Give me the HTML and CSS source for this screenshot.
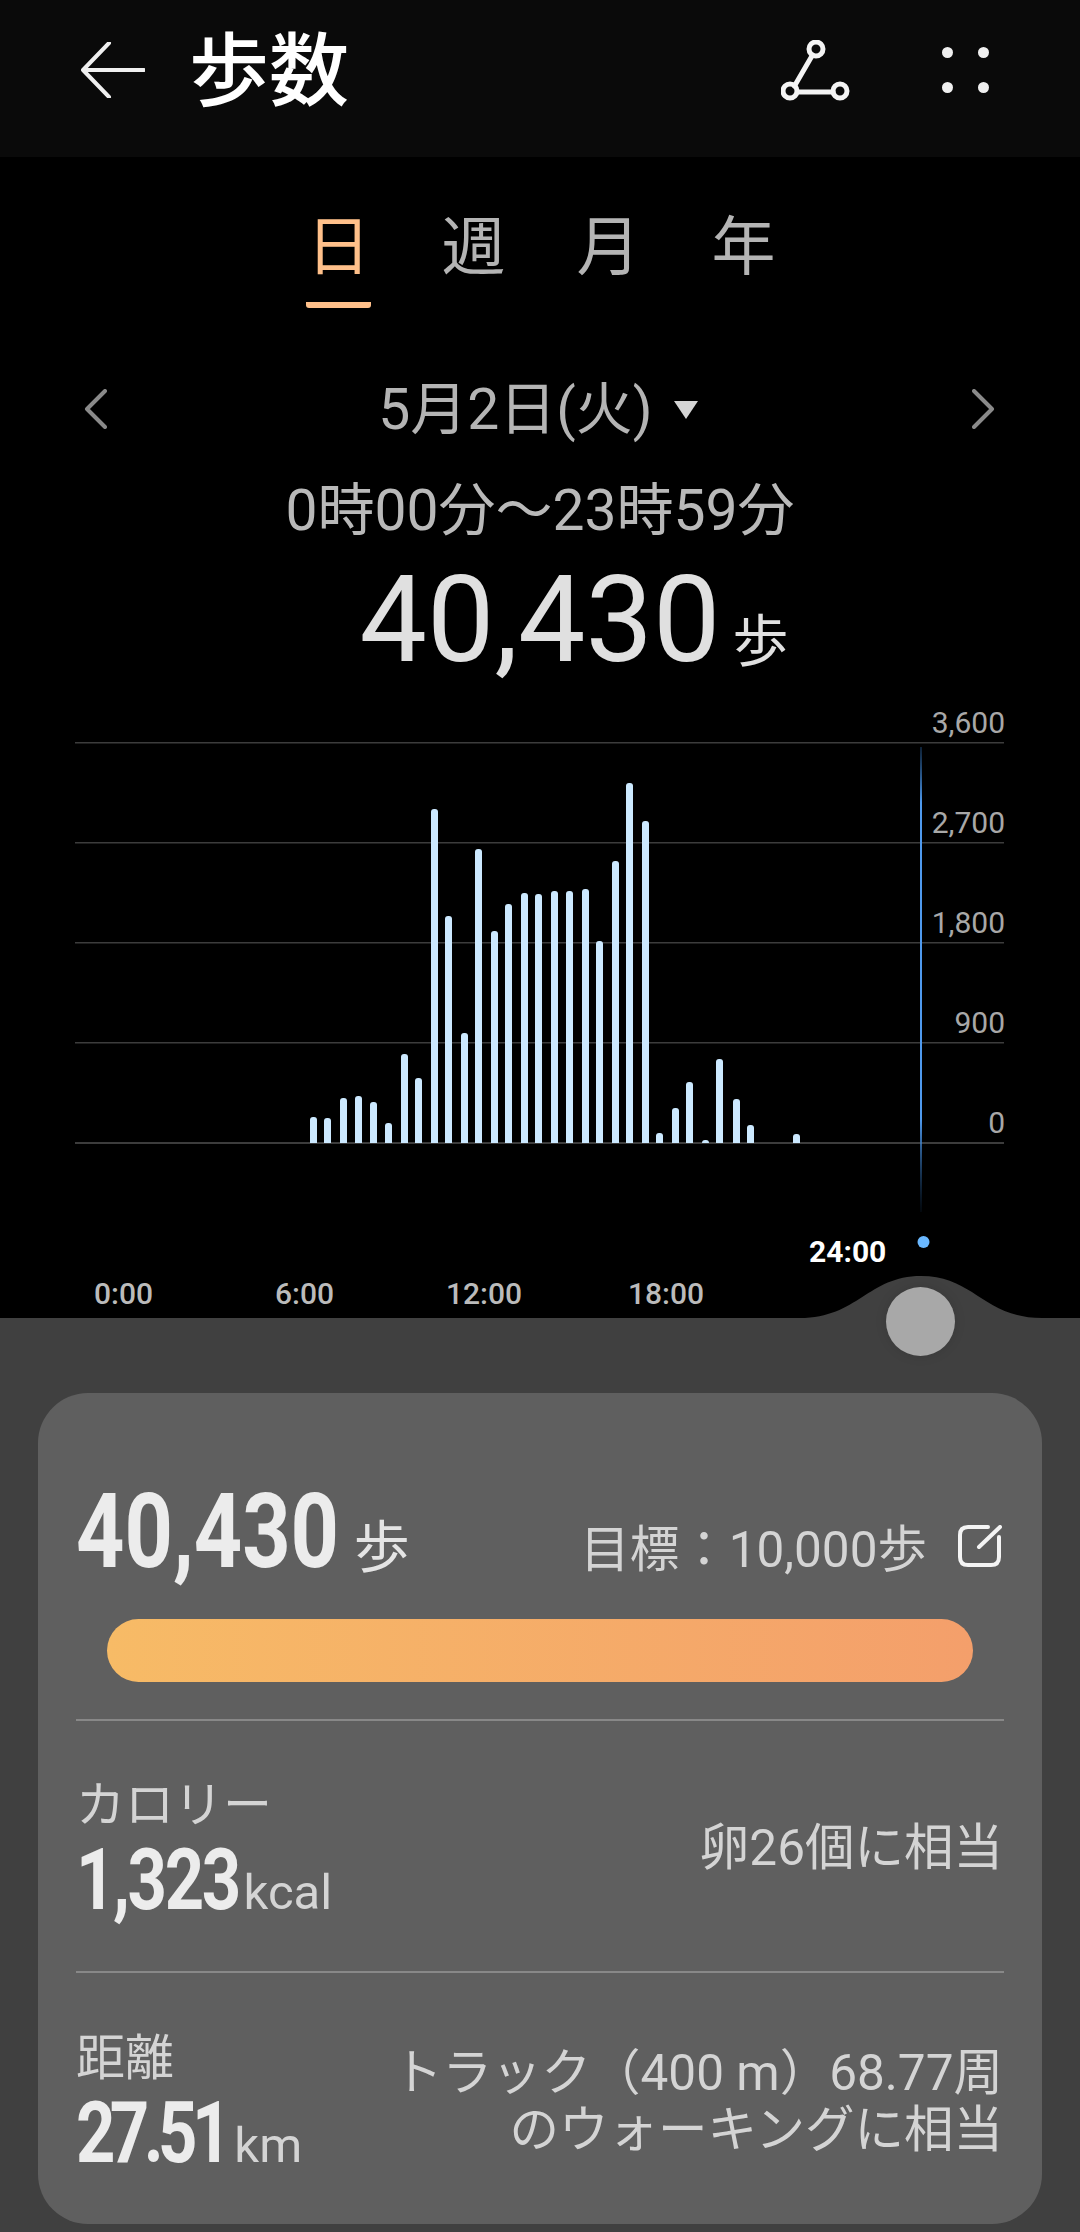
FILE: index.html
```html
<!DOCTYPE html>
<html lang="ja">
<head>
  <meta charset="UTF-8" />
  <meta name="viewport" content="width=device-width, initial-scale=1.0"/>
  <title>歩数</title>
  <link rel="stylesheet" href="styles.css">
</head>
<body>

<header class="app-bar">
  <svg class="back-icon" viewBox="0 0 64 56" width="64" height="56">
    <path d="M28 1 L2 28 L28 55 M2 28 H63" />
  </svg>
  <h1 class="app-title">歩数</h1>
  <svg class="share-icon" viewBox="0 0 70 62" width="70" height="62">
    <path d="M31.5 15 L13.5 46 M17 52 H52" />
    <circle cx="35" cy="9" r="7" />
    <circle cx="9" cy="51" r="7" />
    <circle cx="59" cy="51" r="7" />
  </svg>
  <div class="more-icon">
    <span></span><span></span><span></span><span></span>
  </div>
</header>

<nav class="tabs">
  <div class="tab active">日</div>
  <div class="tab">週</div>
  <div class="tab">月</div>
  <div class="tab">年</div>
</nav>

<div class="date-row">
  <svg class="chevron" viewBox="0 0 23 40" width="23" height="40"><path d="M21 2 L3 20 L21 38" /></svg>
  <div class="date-label">5月2日(火)<span class="caret"></span></div>
  <svg class="chevron" viewBox="0 0 23 40" width="23" height="40"><path d="M2 2 L20 20 L2 38" /></svg>
</div>

<div class="time-range">0時00分～23時59分</div>

<div class="total">
  <div class="total-num">40,430</div>
  <div class="total-unit">歩</div>
</div>

<section class="chart">
  <svg class="chart-svg" viewBox="0 700 1080 618" width="1080" height="618">
    <defs>
      <clipPath id="above-base"><rect x="0" y="700" width="1080" height="443" /></clipPath>
      <linearGradient id="cursor-fade" x1="0" y1="0" x2="0" y2="1">
        <stop offset="0" stop-color="#2f6fb5" stop-opacity="0.3" />
        <stop offset="0.12" stop-color="#4f9aee" />
        <stop offset="0.8" stop-color="#4f9aee" />
        <stop offset="1" stop-color="#1c4c80" stop-opacity="0.1" />
      </linearGradient>
    </defs>
    <g class="grid">
      <rect x="75" y="742" width="929" height="1.5" />
      <rect x="75" y="842" width="929" height="1.5" />
      <rect x="75" y="942" width="929" height="1.5" />
      <rect x="75" y="1042" width="929" height="1.5" />
      <rect x="75" y="1142" width="929" height="2" />
    </g>
    <rect x="920" y="747" width="2" height="465" fill="url(#cursor-fade)" />
    <g class="bars" clip-path="url(#above-base)">
      <rect x="310" y="1117" width="7" height="40" rx="3" />
      <rect x="324" y="1118" width="7" height="40" rx="3" />
      <rect x="340" y="1098" width="7" height="60" rx="3" />
      <rect x="355" y="1096" width="7" height="60" rx="3" />
      <rect x="370" y="1102" width="7" height="60" rx="3" />
      <rect x="385" y="1123" width="7" height="40" rx="3" />
      <rect x="401" y="1054" width="7" height="100" rx="3" />
      <rect x="415" y="1078" width="7" height="80" rx="3" />
      <rect x="431" y="809" width="7" height="350" rx="3" />
      <rect x="445" y="916" width="7" height="240" rx="3" />
      <rect x="461" y="1033" width="7" height="120" rx="3" />
      <rect x="475" y="849" width="7" height="310" rx="3" />
      <rect x="491" y="931" width="7" height="220" rx="3" />
      <rect x="505" y="904" width="7" height="250" rx="3" />
      <rect x="521" y="893" width="7" height="260" rx="3" />
      <rect x="535" y="894" width="7" height="260" rx="3" />
      <rect x="551" y="891" width="7" height="260" rx="3" />
      <rect x="566" y="891" width="7" height="260" rx="3" />
      <rect x="582" y="889" width="7" height="260" rx="3" />
      <rect x="596" y="941" width="7" height="210" rx="3" />
      <rect x="612" y="861" width="7" height="290" rx="3" />
      <rect x="626" y="783" width="7" height="370" rx="3" />
      <rect x="642" y="821" width="7" height="330" rx="3" />
      <rect x="656" y="1133" width="7" height="20" rx="3" />
      <rect x="672" y="1108" width="7" height="50" rx="3" />
      <rect x="686" y="1082" width="7" height="70" rx="3" />
      <rect x="702" y="1140" width="7" height="20" rx="3" />
      <rect x="716" y="1059" width="7" height="100" rx="3" />
      <rect x="733" y="1099" width="7" height="60" rx="3" />
      <rect x="747" y="1125" width="7" height="30" rx="3" />
      <rect x="793" y="1134" width="7" height="20" rx="3" />
    </g>
    <circle class="cursor-dot" cx="923.5" cy="1242" r="6" />
    <path class="hump" d="M800 1318 C858 1318 868 1276 921 1276 C974 1276 984 1318 1042 1318 Z" />
  </svg>

  <span class="y-label" style="top: 5px">3,600</span>
  <span class="y-label" style="top: 105px">2,700</span>
  <span class="y-label" style="top: 205px">1,800</span>
  <span class="y-label" style="top: 305px">900</span>
  <span class="y-label" style="top: 405px">0</span>

  <span class="x-label" style="left: 94px">0:00</span>
  <span class="x-label" style="left: 275px">6:00</span>
  <span class="x-label" style="left: 446px">12:00</span>
  <span class="x-label" style="left: 628px">18:00</span>
  <span class="x-now">24:00</span>
</section>

<main class="panel">
  <div class="handle"></div>
  <div class="card">
    <div class="card-section steps">
      <div class="steps-head">
        <div class="steps-left">
          <span class="big-num large">40,430</span>
          <span class="steps-unit">歩</span>
        </div>
        <div class="goal">
          <span>目標：10,000歩</span>
          <svg class="edit-icon" viewBox="0 0 44 42" width="44" height="42">
            <path class="edit-box" d="M30 2 H10 Q2 2 2 10 V32 Q2 40 10 40 H33 Q41 40 41 32 V12" />
            <path class="edit-pen" d="M42 2 L21 22" />
          </svg>
        </div>
      </div>
      <div class="progress"></div>
    </div>

    <div class="card-section metric">
      <div class="metric-main">
        <div class="metric-label">カロリー</div>
        <div class="metric-value"><span class="big-num cal">1,323</span><span class="metric-unit">kcal</span></div>
      </div>
      <div class="metric-note">卵26個に相当</div>
    </div>

    <div class="card-section metric last">
      <div class="metric-main">
        <div class="metric-label">距離</div>
        <div class="metric-value"><span class="big-num dist">27.51</span><span class="metric-unit">km</span></div>
      </div>
      <div class="metric-note">トラック（400 m）68.77周<br>のウォーキングに相当</div>
    </div>
  </div>
</main>

</body>
</html>
```

FILE: styles.css
```css
* {
  box-sizing: border-box;
}

html, body {
  margin: 0;
  background: #000;
}

body {
  width: 1080px;
  height: 2232px;
  overflow: hidden;
  font-family: "Roboto", "Noto Sans CJK JP", sans-serif;
  color: #b4b4b4;
}

/* top bar */
.app-bar {
  height: 157px;
  background: #0a0a0a;
  display: flex;
  align-items: flex-start;
  padding: 0 0 0 81px;
}

.back-icon {
  margin-top: 42px;
  flex-shrink: 0;
}

.back-icon path {
  fill: none;
  stroke: #f0f0f0;
  stroke-width: 4;
  stroke-linecap: round;
  stroke-linejoin: round;
}

.app-title {
  margin: 24px 0 0 44px;
  font-size: 80px;
  line-height: 96px;
  font-weight: 500;
  color: #fff;
  flex: 1;
}

.share-icon {
  margin: 40px 24px 0 0;
  flex-shrink: 0;
}

.share-icon path, .share-icon circle {
  fill: none;
  stroke: #f4f4f4;
  stroke-width: 5;
  stroke-linecap: round;
}

.more-icon {
  margin: 47px 91px 0 67px;
  display: grid;
  grid-template-columns: 11px 11px;
  grid-auto-rows: 11px;
  column-gap: 25px;
  row-gap: 24px;
}

.more-icon span {
  background: #f0f0f0;
  border-radius: 50%;
}

/* day / week / month / year */
.tabs {
  margin-top: 56px;
  padding-left: 2px;
  display: flex;
  justify-content: center;
  gap: 70px;
}

.tab {
  width: 65px;
  height: 95px;
  text-align: center;
  font-size: 64px;
  line-height: 70px;
  color: #b4b4b4;
}

.tab.active {
  color: #ffc08a;
  border-bottom: 6px solid #ffc08a;
  border-radius: 0 0 3px 3px;
}

.date-row {
  margin-top: 70px;
  padding: 0 85px 0 84px;
  display: flex;
  justify-content: space-between;
  align-items: center;
  height: 64px;
}

.chevron {
  margin-top: -3px;
}

.chevron path {
  fill: none;
  stroke: #8a8a8a;
  stroke-width: 4;
  stroke-linecap: round;
  stroke-linejoin: round;
}

.date-label {
  font-size: 57px;
  line-height: 64px;
  color: #b4b4b4;
  display: flex;
  align-items: center;
  margin-left: -3px;
}

.caret {
  width: 0;
  height: 0;
  margin-left: 21px;
  border-left: 12px solid transparent;
  border-right: 12px solid transparent;
  border-top: 18px solid #d4d4d4;
}

.time-range {
  margin-top: 39px;
  text-align: center;
  font-size: 57px;
  line-height: 60px;
  color: #b9b9b9;
}

.total {
  display: grid;
  grid-template-columns: 1fr auto 1fr;
  align-items: baseline;
  margin-top: 10px;
  height: 149px;
  color: #e0e0e0;
}

.total-num {
  grid-column: 2;
  font-size: 120px;
  line-height: 138px;
}

.total-unit {
  font-size: 56px;
  margin-left: 12px;
}

/* chart, y 700 down to the panel */
.chart {
  position: absolute;
  top: 700px;
  left: 0;
  width: 1080px;
  height: 618px;
}

.chart-svg {
  display: block;
}

.grid rect {
  fill: #3c3c3c;
}

.bars rect {
  fill: #cce9ff;
}

.cursor-dot {
  fill: #6ab8ff;
}

.hump {
  fill: #404040;
}

.y-label {
  position: absolute;
  right: 75px;
  font-size: 30px;
  line-height: 36px;
  color: #a8a8a8;
}

.x-label {
  position: absolute;
  top: 576px;
  font-size: 30px;
  line-height: 36px;
  font-weight: 500;
  color: #bbb;
}

.x-now {
  position: absolute;
  top: 534px;
  left: 809px;
  font-size: 30px;
  line-height: 36px;
  font-weight: 700;
  color: #fff;
}

/* bottom panel */
.panel {
  position: absolute;
  top: 1318px;
  left: 0;
  width: 1080px;
  height: 914px;
  background: #404040;
  padding: 75px 38px 0 38px;
}

.handle {
  position: absolute;
  top: -31px;
  left: 886px;
  width: 69px;
  height: 69px;
  border-radius: 50%;
  background: #a8a8a8;
  box-shadow: 0 0 12px rgba(0, 0, 0, 0.12);
}

.card {
  height: 831px;
  background: #5f5f5f;
  border-radius: 50px;
  padding: 0 38px;
  color: #d4d4d4;
}

.card-section {
  border-bottom: 2px solid #888;
}

.card-section.last {
  border-bottom: none;
}

.steps {
  height: 328px;
  padding-top: 83px;
}

.steps-head {
  display: flex;
  justify-content: space-between;
  align-items: baseline;
}

.steps-left {
  display: flex;
  align-items: baseline;
}

/* no condensed face installed, so the digits are squeezed */
.big-num {
  display: inline-block;
  transform: scaleX(0.8);
  transform-origin: left bottom;
  font-weight: 700;
  font-size: 86px;
  line-height: 90px;
  color: #ececec;
}

.big-num.large {
  transform: scaleX(0.82);
  font-size: 103px;
  line-height: 112px;
  margin-right: -63px;
}

.big-num.cal {
  letter-spacing: -3px;
  margin-right: -46px;
}

.big-num.dist {
  letter-spacing: -7px;
  margin-right: -39px;
}

.steps-unit {
  font-size: 56px;
  margin-left: 20px;
  color: #e4e4e4;
}

.goal {
  display: flex;
  align-items: center;
  gap: 31px;
  font-size: 49.5px;
  padding-right: 2px;
}

.edit-icon {
  flex-shrink: 0;
}

.edit-box, .edit-pen {
  fill: none;
  stroke: #f4f4f4;
  stroke-width: 4;
  stroke-linecap: round;
}

.progress {
  margin: 31px 31px 0 31px;
  height: 63px;
  border-radius: 32px;
  background: linear-gradient(90deg, #f7bb66, #f49f6b);
}

.metric {
  height: 252px;
  display: flex;
  justify-content: space-between;
  align-items: center;
  padding-right: 1px;
}

.metric-main {
  margin-top: 22px;
}

.metric-label {
  font-size: 49px;
  line-height: 58px;
}

.metric-value {
  display: flex;
  align-items: baseline;
  line-height: 90px;
}

.metric-unit {
  font-size: 49px;
  margin-left: 10px;
}

.metric-note {
  padding-top: 5px;
  text-align: right;
  font-size: 49.5px;
  line-height: 57px;
}
```
